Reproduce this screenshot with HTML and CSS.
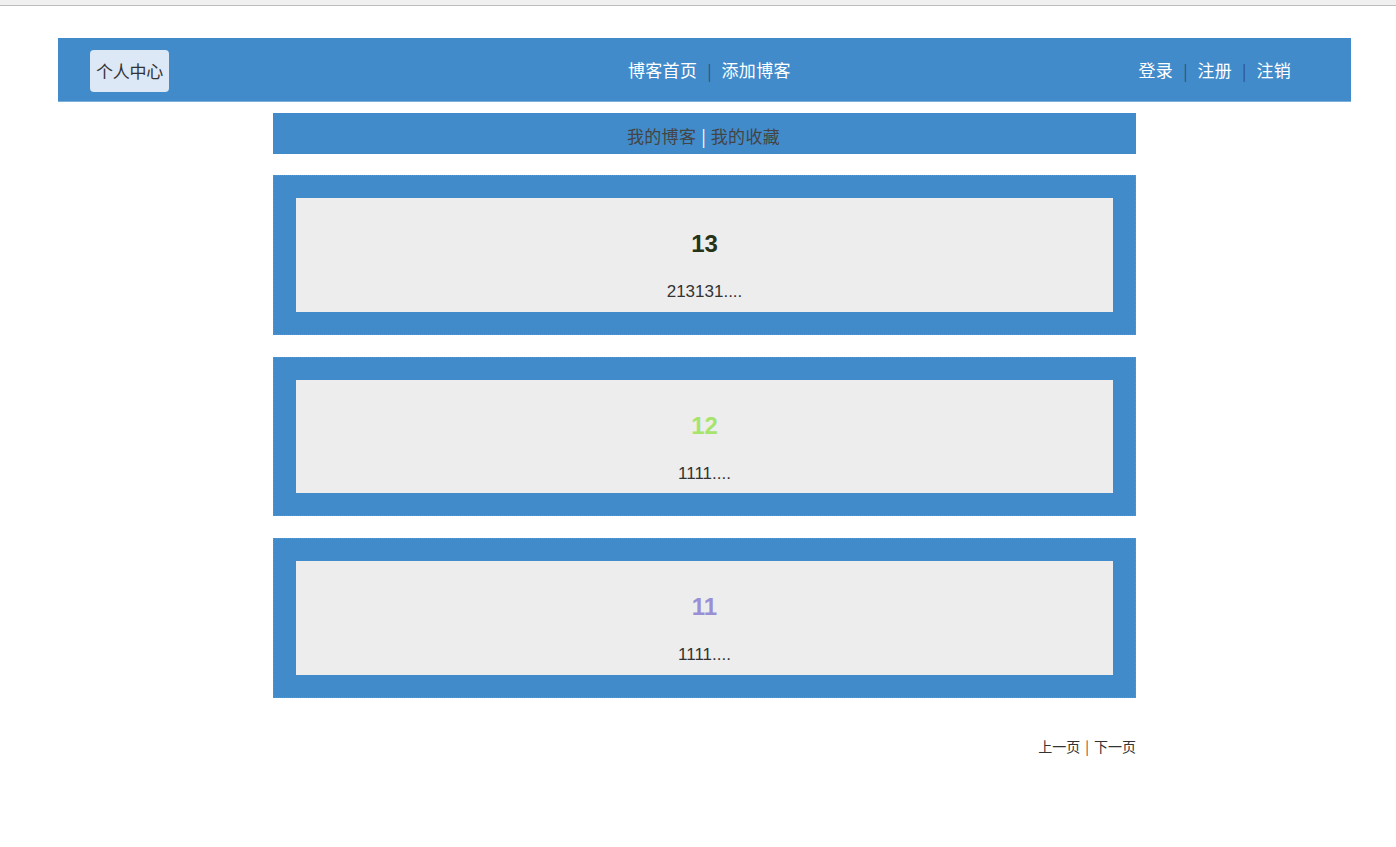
FILE: index.html
```html
<!DOCTYPE html>
<html>
<head>
<meta charset="utf-8">
<link rel="stylesheet" href="styles.css">
</head>
<body>
<div class="chrome"></div>
<div class="header">
  <a class="btn-center">个人中心</a>
  <div class="nav-mid">
    <a>博客首页</a><span class="sep">|</span><a>添加博客</a>
  </div>
  <div class="nav-right">
    <a>登录</a><span class="sep">|</span><a>注册</a><span class="sep">|</span><a>注销</a>
  </div>
</div>
<div class="main">
  <div class="subnav"><a>我的博客</a><span class="sub-sep">|</span><a>我的收藏</a></div>
  <div class="card">
    <div class="card-inner">
      <h2 class="title t1">13</h2>
      <p class="excerpt">213131....</p>
    </div>
  </div>
  <div class="card">
    <div class="card-inner">
      <h2 class="title t2">12</h2>
      <p class="excerpt">1111....</p>
    </div>
  </div>
  <div class="card">
    <div class="card-inner">
      <h2 class="title t3">11</h2>
      <p class="excerpt">1111....</p>
    </div>
  </div>
  <div class="pager"><a>上一页</a><span class="pager-sep">|</span><a>下一页</a></div>
</div>
</body>
</html>
```
FILE: styles.css
```css
* { box-sizing: border-box; }
html, body { margin: 0; padding: 0; background: #fff; }
body {
  font-family: "Microsoft YaHei", "Noto Sans CJK SC", "Liberation Sans", sans-serif;
  color: #333;
}
a { text-decoration: none; cursor: pointer; }
.chrome {
  height: 6px;
  background: #f0f0f0;
  border-bottom: 1px solid #bdbdbd;
}
.header {
  margin: 32px 45px 0 58px;
  height: 64px;
  background: #418bca;
  border-bottom: 1px solid #7aaedb;
  display: flex;
  align-items: center;
  padding: 0 60px 0 32px;
}
.btn-center {
  display: block;
  background: #dce8f5;
  border-radius: 4px;
  height: 42px;
  width: 79px;
  line-height: 42px;
  text-align: center;
  color: #333;
  font-size: 17px;
  margin-top: 2px;
  letter-spacing: -0.3px;
}
.nav-mid, .nav-right {
  display: flex;
  align-items: center;
  font-size: 17px;
  color: #fff;
}
.nav-mid { margin-left: 459px; }
.nav-right { margin-left: auto; }
.nav-mid a, .nav-right a { color: #fff; letter-spacing: 0.3px; }
.sep {
  color: #2f4f78;
  margin: 0 10px;
  font-size: 16px;
}
.main {
  width: 863px;
  margin: 11px 0 0 273px;
}
.subnav {
  height: 41px;
  background: #418bca;
  display: flex;
  justify-content: center;
  align-items: center;
  font-size: 17px;
  padding-top: 3px;
  padding-right: 2px;
}
.subnav a { color: #444; letter-spacing: 0.3px; }
.sub-sep { color: #fff; margin: 0 5px; }
.card {
  margin-top: 21px;
  height: 159.5px;
  background: #418bca;
  border: 1px dotted #8a8a8a;
  padding: 22px;
}
.card + .card { margin-top: 22px; }
.card-inner {
  background: #ededed;
  height: 113.5px;
  text-align: center;
  overflow: hidden;
}
.title {
  font-family: "Liberation Sans", Arial, sans-serif;
  font-size: 24px;
  font-weight: bold;
  margin: 32px 0 0;
  line-height: 28px;
}
.t1 { color: #253418; }
.t2 { color: #a6e46c; }
.t3 { color: #9a8fd6; }
.excerpt {
  font-family: "Liberation Sans", Arial, sans-serif;
  font-size: 17px;
  margin: 24px 0 0;
  line-height: 20px;
  color: #333;
}
.pager {
  margin-top: 38px;
  text-align: right;
  font-size: 14px;
}
.pager a { color: #333; }
.pager-sep { color: #a03030; margin: 0 5px; }
```
